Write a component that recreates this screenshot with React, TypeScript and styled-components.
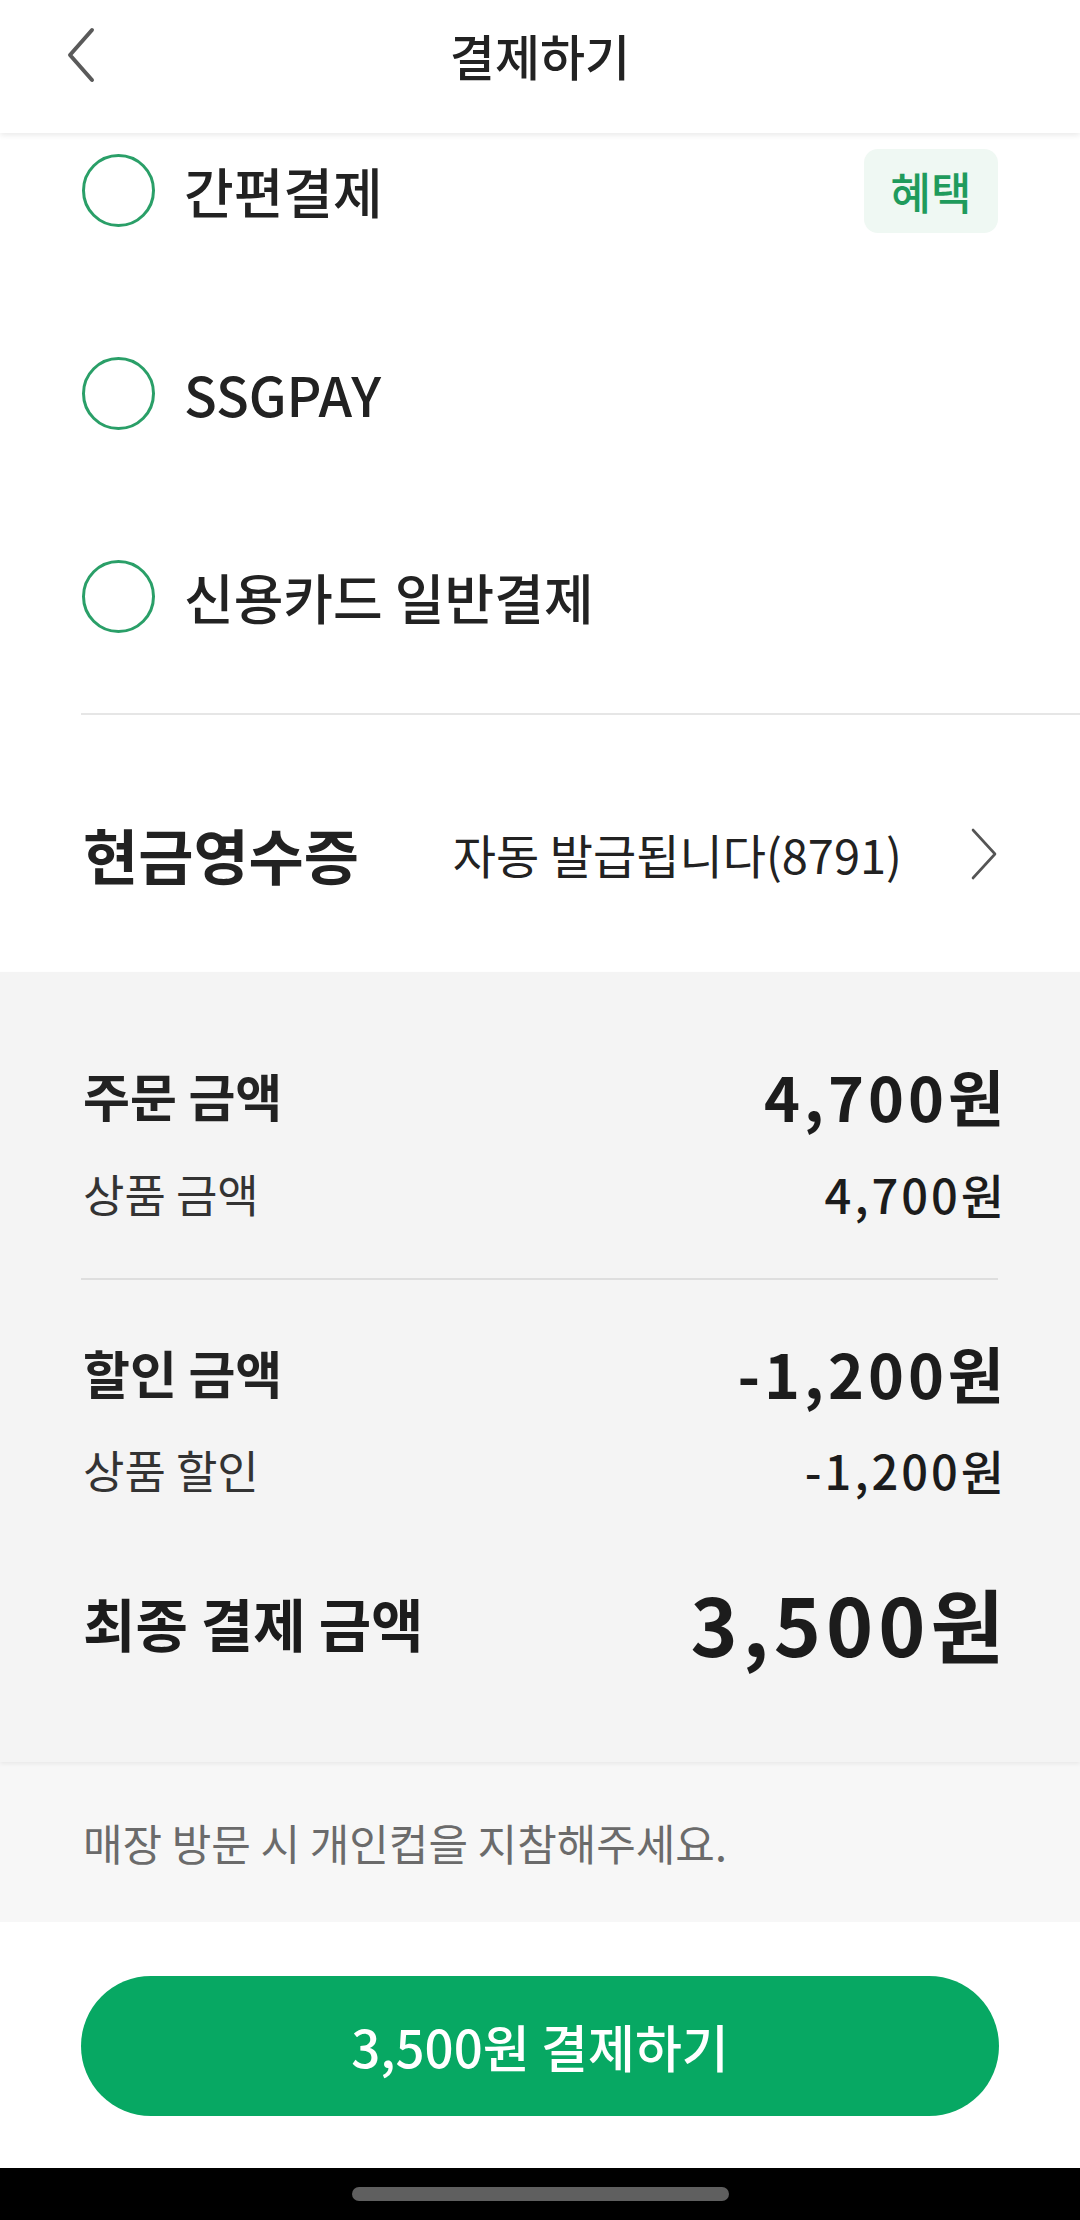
import React from 'react';
import styled, { createGlobalStyle } from 'styled-components';

const GlobalStyle = createGlobalStyle`
  * { box-sizing: border-box; }
  html, body {
    margin: 0;
    padding: 0;
    background: #ffffff;
    font-family: "Noto Sans CJK KR", "Noto Sans", sans-serif;
    color: #222222;
  }
`;

const Screen = styled.div`
  width: 1080px;
  height: 2220px;
  display: flex;
  flex-direction: column;
  overflow: hidden;
  background: #ffffff;
`;

const Header = styled.header`
  position: relative;
  z-index: 2;
  height: 133px;
  flex-shrink: 0;
  background: #ffffff;
  box-shadow: 0 2px 6px rgba(0, 0, 0, 0.09);
`;

const HeaderBar = styled.div`
  height: 110px;
  display: grid;
  grid-template-columns: 160px 1fr 160px;
  align-items: center;
`;

const BackButton = styled.button`
  border: none;
  background: none;
  padding: 0 0 0 66px;
  display: flex;
  align-items: center;
  height: 100%;
  cursor: pointer;
`;

const Title = styled.h1`
  margin: 0;
  text-align: center;
  font-size: 49px;
  font-weight: 500;
  color: #222;
  line-height: 110px;
`;

const Viewport = styled.div`
  flex-shrink: 0;
  overflow: hidden;
`;

const Scrolled = styled.div`
  margin-top: -44px;
`;

const MethodList = styled.ul`
  list-style: none;
  margin: 0;
  padding: 0 82px 15px 82px;
`;

const MethodRow = styled.li`
  height: 203px;
  display: flex;
  align-items: center;
  gap: 29px;
`;

const Radio = styled.span`
  width: 73px;
  height: 73px;
  border-radius: 50%;
  border: 3px solid #2a9f68;
  flex-shrink: 0;
`;

const MethodLabel = styled.span`
  flex: 1;
  font-size: 54px;
  font-weight: 500;
  color: #222;
`;

const Badge = styled.span`
  width: 134px;
  height: 84px;
  border-radius: 14px;
  background: #eff8f3;
  color: #1f9b5c;
  font-size: 44px;
  font-weight: 500;
  display: flex;
  align-items: center;
  justify-content: center;
`;

const Divider = styled.hr`
  margin: 0 0 0 81px;
  border: none;
  height: 2px;
  background: #e6e6e6;
`;

const ReceiptRow = styled.div`
  height: 257px;
  padding: 20px 82px 0 83px;
  display: flex;
  align-items: center;
  justify-content: space-between;
`;

const ReceiptLabel = styled.span`
  font-size: 60px;
  font-weight: 700;
  color: #222;
`;

const ReceiptValue = styled.span`
  display: flex;
  align-items: center;
  gap: 68px;
  font-size: 47px;
  font-weight: 400;
  color: #222;
`;

const Summary = styled.section`
  position: relative;
  z-index: 1;
  height: 790px;
  flex-shrink: 0;
  background: #f4f4f4;
  padding: 83px 76px 0 83px;
  box-shadow: 0 2px 4px rgba(0, 0, 0, 0.06);
`;

type RowKind = 'main' | 'sub' | 'total';

const rowSpec: Record<RowKind, { h: number; label: number; lw: number; amount: number; aw: number; ls: number; color: string }> = {
  main: { h: 80, label: 51, lw: 700, amount: 61, aw: 700, ls: 4, color: '#222' },
  sub: { h: 80, label: 45, lw: 400, amount: 47, aw: 500, ls: 3, color: '#333' },
  total: { h: 100, label: 57, lw: 700, amount: 80, aw: 700, ls: 5, color: '#1c1c1c' },
};

const AmountRow = styled.div<{ $kind: RowKind; $gap?: number }>`
  height: ${p => rowSpec[p.$kind].h}px;
  margin-top: ${p => p.$gap ?? 0}px;
  display: flex;
  align-items: center;
  justify-content: space-between;
`;

const AmountLabel = styled.span<{ $kind: RowKind }>`
  font-size: ${p => rowSpec[p.$kind].label}px;
  font-weight: ${p => rowSpec[p.$kind].lw};
  color: ${p => rowSpec[p.$kind].color};
`;

const AmountValue = styled.span<{ $kind: RowKind }>`
  font-size: ${p => rowSpec[p.$kind].amount}px;
  font-weight: ${p => rowSpec[p.$kind].aw};
  letter-spacing: ${p => rowSpec[p.$kind].ls}px;
  margin-right: -${p => rowSpec[p.$kind].ls}px;
  color: #1c1c1c;
`;

const SummaryDivider = styled.hr`
  margin: 45px 6px 0 -2px;
  border: none;
  height: 2px;
  background: #dedede;
`;

const Notice = styled.div`
  height: 160px;
  flex-shrink: 0;
  background: #f7f7f7;
  padding: 0 83px;
  display: flex;
  align-items: center;
  font-size: 43px;
  color: #6b6b6b;
`;

const Footer = styled.div`
  flex: 1;
  background: #ffffff;
  padding: 54px 81px 0 81px;
`;

const PayButton = styled.button`
  width: 100%;
  height: 140px;
  border: none;
  border-radius: 70px;
  background: #07a863;
  color: #ffffff;
  font-family: "Noto Sans CJK KR", "Noto Sans", sans-serif;
  font-size: 51px;
  font-weight: 500;
  cursor: pointer;
`;

const NavBar = styled.div`
  height: 52px;
  flex-shrink: 0;
  background: #000000;
  display: flex;
  align-items: center;
  justify-content: center;
`;

const HomeIndicator = styled.span`
  width: 377px;
  height: 14px;
  border-radius: 7px;
  background: #5f5f5f;
`;

const BackIcon = () => (
  <svg width="30" height="56" viewBox="0 0 30 56">
    <path d="M26 3 L4 28 L26 53" fill="none" stroke="#5a5a5a" strokeWidth="4" strokeLinecap="round" strokeLinejoin="round" />
  </svg>
);

const ChevronRight = () => (
  <svg width="28" height="52" viewBox="0 0 28 52">
    <path d="M3 2 L25 26 L3 50" fill="none" stroke="#555" strokeWidth="2.6" strokeLinecap="round" strokeLinejoin="round" />
  </svg>
);

const methods = [
  { label: '간편결제', badge: '혜택' },
  { label: 'SSGPAY' },
  { label: '신용카드 일반결제' },
];

export default function App() {
  return (
    <>
      <GlobalStyle />
      <Screen>
        <Header>
          <HeaderBar>
            <BackButton aria-label="뒤로">
              <BackIcon />
            </BackButton>
            <Title>결제하기</Title>
            <span />
          </HeaderBar>
        </Header>

        <Viewport>
          <Scrolled>
            <MethodList>
              {methods.map(m => (
                <MethodRow key={m.label}>
                  <Radio />
                  <MethodLabel>{m.label}</MethodLabel>
                  {m.badge && <Badge>{m.badge}</Badge>}
                </MethodRow>
              ))}
            </MethodList>
            <Divider />
            <ReceiptRow>
              <ReceiptLabel>현금영수증</ReceiptLabel>
              <ReceiptValue>
                자동 발급됩니다(8791)
                <ChevronRight />
              </ReceiptValue>
            </ReceiptRow>
          </Scrolled>
        </Viewport>

        <Summary>
          <AmountRow $kind="main">
            <AmountLabel $kind="main">주문 금액</AmountLabel>
            <AmountValue $kind="main">4,700원</AmountValue>
          </AmountRow>
          <AmountRow $kind="sub" $gap={18}>
            <AmountLabel $kind="sub">상품 금액</AmountLabel>
            <AmountValue $kind="sub">4,700원</AmountValue>
          </AmountRow>
          <SummaryDivider />
          <AmountRow $kind="main" $gap={52}>
            <AmountLabel $kind="main">할인 금액</AmountLabel>
            <AmountValue $kind="main">-1,200원</AmountValue>
          </AmountRow>
          <AmountRow $kind="sub" $gap={17}>
            <AmountLabel $kind="sub">상품 할인</AmountLabel>
            <AmountValue $kind="sub">-1,200원</AmountValue>
          </AmountRow>
          <AmountRow $kind="total" $gap={63}>
            <AmountLabel $kind="total">최종 결제 금액</AmountLabel>
            <AmountValue $kind="total">3,500원</AmountValue>
          </AmountRow>
        </Summary>

        <Notice>매장 방문 시 개인컵을 지참해주세요.</Notice>

        <Footer>
          <PayButton>3,500원 결제하기</PayButton>
        </Footer>

        <NavBar>
          <HomeIndicator />
        </NavBar>
      </Screen>
    </>
  );
}
